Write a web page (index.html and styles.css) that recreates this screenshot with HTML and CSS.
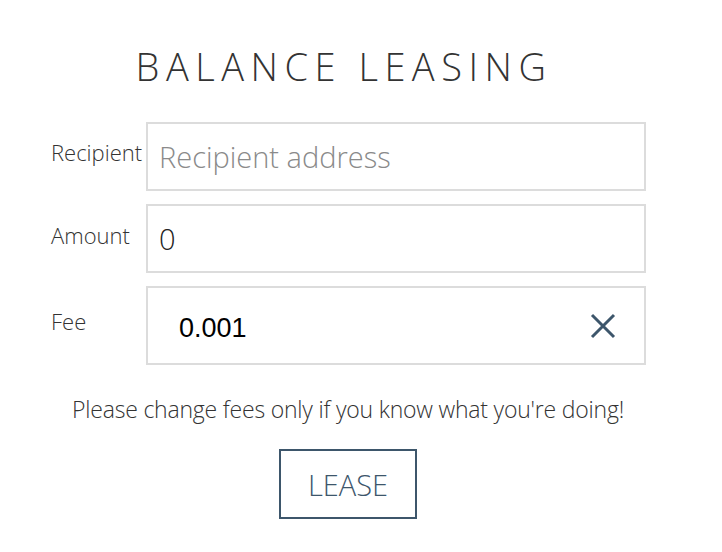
FILE: index.html
```html
<!DOCTYPE html>
<html>
<head>
<meta charset="utf-8">
<link rel="stylesheet" href="styles.css">
</head>
<body>
<div class="page">
  <h1 class="title">BALANCE LEASING</h1>
  <div class="form">
    <div class="row row-recipient">
      <label class="label">Recipient</label>
      <div class="field"><span class="placeholder">Recipient address</span></div>
    </div>
    <div class="row row-amount">
      <label class="label">Amount</label>
      <div class="field"><span class="value">0</span></div>
    </div>
    <div class="row row-fee">
      <label class="label">Fee</label>
      <div class="field field-fee">
        <span class="fee-value">0.001</span>
        <svg class="clear" width="26" height="26" viewBox="0 0 26 26"><path d="M2 2 L24 24 M24 2 L2 24" stroke="#3d566b" stroke-width="3" fill="none"/></svg>
      </div>
    </div>
  </div>
  <p class="warning">Please change fees only if you know what you're doing!</p>
  <div class="actions"><button class="lease">LEASE</button></div>
</div>
</body>
</html>
```
FILE: styles.css
```css
html, body { margin: 0; padding: 0; background: #fff; }
body { font-family: "Open Sans", "Noto Sans", sans-serif; font-weight: 300; color: #333; }
.page { width: 722px; height: 552px; display: flex; flex-direction: column; }
.title {
  margin: 44px 0 0 0;
  text-align: center;
  font-weight: 300;
  font-size: 38px;
  line-height: 44px;
  letter-spacing: 6.5px;
  padding-right: 34px;
  color: #333;
}
.form { margin-top: 34px; display: flex; flex-direction: column; gap: 13px; }
.row { display: grid; grid-template-columns: 95px 500px; margin-left: 51px; }
.label { font-size: 22px; color: #333; letter-spacing: 0; }
.row-recipient .label { padding-top: 15px; }
.row-amount .label { padding-top: 16px; }
.row-fee .label { padding-top: 20px; }
.field {
  height: 69px;
  box-sizing: border-box;
  border: 2px solid #dcdcdc;
  display: flex;
  align-items: center;
  padding-left: 11px;
  font-size: 29px;
}
.placeholder { color: #8a8a8a; }
.value { color: #222; }
.field-fee { height: 79px; padding-left: 31px; padding-right: 28px; justify-content: space-between; }
.fee-value { font-family: "Liberation Sans", Arial, sans-serif; font-weight: 400; font-size: 27px; color: #000; padding-top: 5px; }
.warning {
  margin: 28px 0 0 0;
  text-align: center;
  font-size: 23px;
  color: #333;
  padding-right: 26px;
  letter-spacing: -0.2px;
}
.actions { display: flex; justify-content: center; margin-top: 24px; padding-right: 26px; }
.lease {
  width: 138px;
  height: 70px;
  background: #fff;
  border: 2px solid #3d566b;
  color: #3d566b;
  font-family: "Open Sans", sans-serif;
  font-weight: 300;
  font-size: 29px;
  padding: 0;
}
```
